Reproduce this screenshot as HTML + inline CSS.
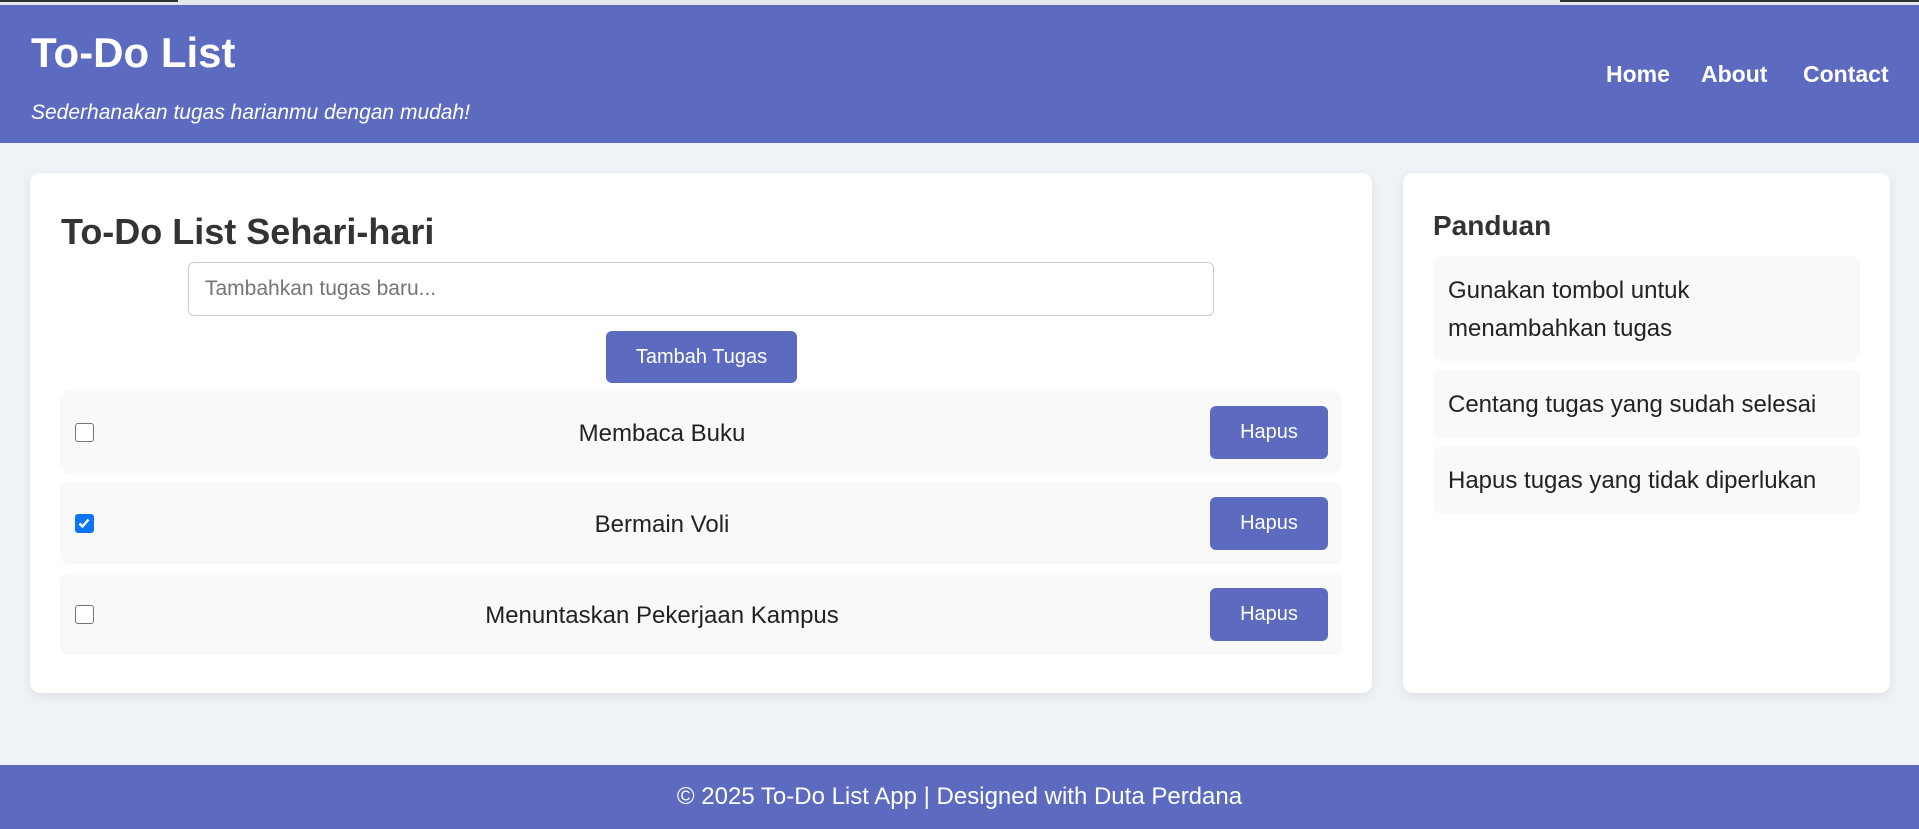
<!DOCTYPE html>
<html><head><meta charset="utf-8"><style>
*{box-sizing:border-box;margin:0;padding:0}
body{width:1919px;height:827px;overflow:hidden;background:#eff2f7;font-family:"Liberation Sans",Arial,sans-serif;color:#333;position:relative}
.a{position:absolute}
.top{left:0;top:0;width:1919px;height:5px;background:#e4e7ec}
.top i{position:absolute;left:0;top:0;width:178px;height:2px;background:#333}
.top b{position:absolute;left:1560px;top:0;width:359px;height:2px;background:#333}
header{left:0;top:5px;width:1919px;height:138px;background:#5c6bc0;color:#fff}
.t1{left:31px;top:24px;font-size:42px;font-weight:bold;line-height:48px}
.t2{left:31px;top:96px;font-size:21px;font-style:italic;line-height:24px}
.nav{top:56px;font-size:23px;font-weight:bold;line-height:26px}
.card{background:#fff;border-radius:10px;box-shadow:0 3px 10px rgba(0,0,0,.08)}
.h2{left:61px;top:211px;font-size:36px;font-weight:bold;line-height:42px}
.inp{left:188px;top:262px;width:1026px;height:54px;border:1px solid #ccc;border-radius:6px;background:#fff;font-size:21px;color:#757575;padding:15px 16px;line-height:22px}
.btn{background:#5c6bc0;color:#fff;border-radius:6px;font-size:20px;display:flex;align-items:center;justify-content:center}
.row{left:60px;width:1282px;height:82px;background:#f9f9f9;border-radius:8px}
.row .cb{position:absolute;left:15px;top:32px;width:19px;height:19px;border:1.5px solid #767676;border-radius:3px;background:#fff}
.row .cb.on{background:#0b75f5;border-color:#0b75f5}
.row .tx{position:absolute;left:44px;width:1116px;text-align:center;top:29px;font-size:24px;line-height:28px;color:#222}
.row .btn{position:absolute;left:1150px;top:15px;width:118px;height:53px}
.item{left:1433px;width:427px;background:#f9f9f9;border-radius:8px;font-size:24px;color:#222;padding:0 15px;line-height:38px}
footer{left:0;top:765px;width:1919px;height:64px;background:#5c6bc0;color:#fff;text-align:center;font-size:24px;line-height:64px;overflow:hidden}
</style></head><body>
<div class="a top"><i></i><b></b></div>
<header class="a">
<div class="a t1">To-Do List</div>
<div class="a t2">Sederhanakan tugas harianmu dengan mudah!</div>
<div class="a nav" style="left:1606px">Home</div>
<div class="a nav" style="left:1701px">About</div>
<div class="a nav" style="left:1803px">Contact</div>
</header>
<div class="a card" style="left:30px;top:173px;width:1342px;height:520px"></div>
<div class="a card" style="left:1403px;top:173px;width:487px;height:520px"></div>
<div class="a h2">To-Do List Sehari-hari</div>
<div class="a inp">Tambahkan tugas baru...</div>
<div class="a btn" style="left:606px;top:331px;width:191px;height:52px">Tambah Tugas</div>
<div class="a row" style="top:391px"><div class="cb"></div><div class="tx">Membaca Buku</div><div class="btn">Hapus</div></div>
<div class="a row" style="top:482px"><div class="cb on"><svg width="16" height="16" viewBox="0 0 16 16" style="position:absolute;left:0;top:0"><path d="M3.5 8.5l3 3 6-7" stroke="#fff" stroke-width="2.4" fill="none"/></svg></div><div class="tx">Bermain Voli</div><div class="btn">Hapus</div></div>
<div class="a row" style="top:573px"><div class="cb"></div><div class="tx">Menuntaskan Pekerjaan Kampus</div><div class="btn">Hapus</div></div>
<div class="a" style="left:1433px;top:210px;font-size:28px;font-weight:bold;line-height:32px">Panduan</div>
<div class="a item" style="top:256px;height:105px;padding-top:16px">Gunakan tombol untuk<br>menambahkan tugas</div>
<div class="a item" style="top:370px;height:68px;padding-top:16px">Centang tugas yang sudah selesai</div>
<div class="a item" style="top:446px;height:68px;padding-top:16px">Hapus tugas yang tidak diperlukan</div>
<footer class="a">© 2025 To-Do List App | Designed with Duta Perdana</footer>
</body></html>
